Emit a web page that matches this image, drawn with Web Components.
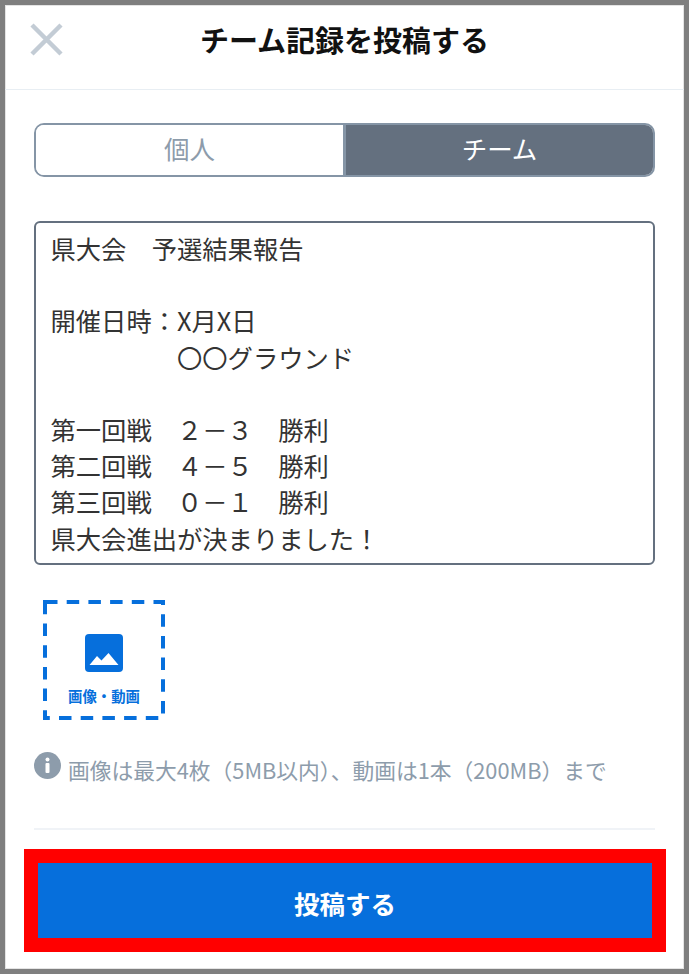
<!DOCTYPE html>
<html lang="ja">
<head>
<meta charset="utf-8">
<style>
  html, body { margin: 0; padding: 0; background: #fff; }
  body { font-family: "Noto Sans CJK JP", "Noto Sans", sans-serif; }
</style>
</head>
<body>
<post-sheet>
  <post-header>チーム記録を投稿する</post-header>
  <post-tabs></post-tabs>
  <post-body>
    <div>県大会　予選結果報告</div>
    <div><br></div>
    <div>開催日時：X月X日</div>
    <div>　　　　　〇〇グラウンド</div>
    <div><br></div>
    <div>第一回戦　２－３　勝利</div>
    <div>第二回戦　４－５　勝利</div>
    <div>第三回戦　０－１　勝利</div>
    <div>県大会進出が決まりました！</div>
  </post-body>
  <post-upload>画像・動画</post-upload>
  <post-hint>画像は最大4枚（5MB以内）、動画は1本（200MB）まで</post-hint>
  <post-submit>投稿する</post-submit>
</post-sheet>

<script>
class PostSheet extends HTMLElement {
  constructor() {
    super();
    this.attachShadow({ mode: 'open' });
    this.shadowRoot.innerHTML = `
      <style>
        :host {
          display: flex; flex-direction: column;
          box-sizing: border-box; width: 689px; height: 974px;
          border: 5px solid #7f7f7f;
          box-shadow: inset 0 0 0 1px #e4e4e4;
          background: #fff; overflow: hidden;
        }
      </style>
      <slot></slot>
    `;
  }
}

class PostHeader extends HTMLElement {
  constructor() {
    super();
    this.attachShadow({ mode: 'open' });
    this.shadowRoot.innerHTML = `
      <style>
        :host {
          display: flex; align-items: center; justify-content: center;
          position: relative; box-sizing: border-box; height: 85px; padding-bottom: 16px;
          border-bottom: 1px solid #e8eef3;
          font-size: 29px; font-weight: 700; color: #111;
        }
        svg { position: absolute; left: 25px; top: 18px; }
      </style>
      <svg width="33" height="33" viewBox="0 0 33 33">
        <path d="M2 2 L31 31 M31 2 L2 31" stroke="#c3ccd5" stroke-width="4.5" fill="none"/>
      </svg>
      <slot></slot>
    `;
  }
}

class PostTabs extends HTMLElement {
  constructor() {
    super();
    this.attachShadow({ mode: 'open' });
    this.shadowRoot.innerHTML = `
      <style>
        :host {
          display: flex; box-sizing: border-box; height: 54px;
          margin: 33px 29px 0;
          border: 2px solid #8595a6; border-radius: 10px; overflow: hidden;
          font-size: 25.5px; line-height: 1;
        }
        div { flex: 1; display: flex; align-items: center; justify-content: center; padding-bottom: 5px; }
        .off { color: #8d9cab; background: #fff; }
        .on { color: #fff; background: #64707f; border-left: 3px solid #8595a6; }
      </style>
      <div class="off">個人</div>
      <div class="on">チーム</div>
    `;
  }
}

class PostBody extends HTMLElement {
  constructor() {
    super();
    this.attachShadow({ mode: 'open' });
    this.shadowRoot.innerHTML = `
      <style>
        :host {
          display: block; box-sizing: border-box; height: 344px;
          margin: 44px 29px 0; padding: 7px 14.5px 0;
          border: 2px solid #64707f; border-radius: 6px; overflow: hidden;
          font-size: 25.3px; line-height: 36.2px; color: #333;
        }
      </style>
      <slot></slot>
    `;
  }
}

class PostUpload extends HTMLElement {
  constructor() {
    super();
    this.attachShadow({ mode: 'open' });
    this.shadowRoot.innerHTML = `
      <style>
        :host {
          display: flex; flex-direction: column; align-items: center;
          position: relative; box-sizing: border-box; width: 122px; height: 120px;
          margin: 35px 0 0 38px; padding-top: 34px;
          font-size: 14.4px; font-weight: 700; line-height: 18px; color: #066fdc;
        }
        .dash { position: absolute; left: 0; top: 0; }
        .pic { display: block; margin-bottom: 15px; }
      </style>
      <svg class="dash" width="122" height="120" viewBox="0 0 122 120">
        <rect x="2" y="2" width="118" height="116" fill="none" stroke="#066fdc" stroke-width="4" stroke-dasharray="12.5 9.2"/>
      </svg>
      <svg class="pic" width="38" height="38" viewBox="0 0 38 38">
        <rect width="38" height="38" rx="4" fill="#066fdc"/>
        <path d="M4.5 31 L12 22 L16.5 26.5 L23.5 19 L33.5 31 Z" fill="#fff"/>
      </svg>
      <slot></slot>
    `;
  }
}

class PostHint extends HTMLElement {
  constructor() {
    super();
    this.attachShadow({ mode: 'open' });
    this.shadowRoot.innerHTML = `
      <style>
        :host {
          display: flex; align-items: flex-start; gap: 7px;
          margin: 32px 29px 0; padding-bottom: 42px;
          border-bottom: 2px solid #f0f3f7;
          font-size: 21.75px; line-height: 32px; color: #8d9cab;
        }
        svg { flex: none; display: block; }
        span { white-space: nowrap; margin-top: 2px; }
      </style>
      <svg width="27" height="27" viewBox="0 0 27 27">
        <circle cx="13.5" cy="13.5" r="13.5" fill="#8d9cab"/>
        <circle cx="13.5" cy="7.5" r="2" fill="#fff"/>
        <rect x="11.5" y="11" width="4" height="10" rx="1" fill="#fff"/>
      </svg>
      <span><slot></slot></span>
    `;
  }
}

class PostSubmit extends HTMLElement {
  constructor() {
    super();
    this.attachShadow({ mode: 'open' });
    this.shadowRoot.innerHTML = `
      <style>
        :host {
          display: flex; align-items: center; justify-content: center;
          box-sizing: border-box; height: 103px;
          margin: 19px 18px 0 19px; padding-top: 4px;
          border: 14px solid #f00; background: #066fdc;
          font-size: 25.5px; font-weight: 700; color: #fff;
        }
      </style>
      <slot></slot>
    `;
  }
}

customElements.define('post-sheet', PostSheet);
customElements.define('post-header', PostHeader);
customElements.define('post-tabs', PostTabs);
customElements.define('post-body', PostBody);
customElements.define('post-upload', PostUpload);
customElements.define('post-hint', PostHint);
customElements.define('post-submit', PostSubmit);
</script>
</body>
</html>
